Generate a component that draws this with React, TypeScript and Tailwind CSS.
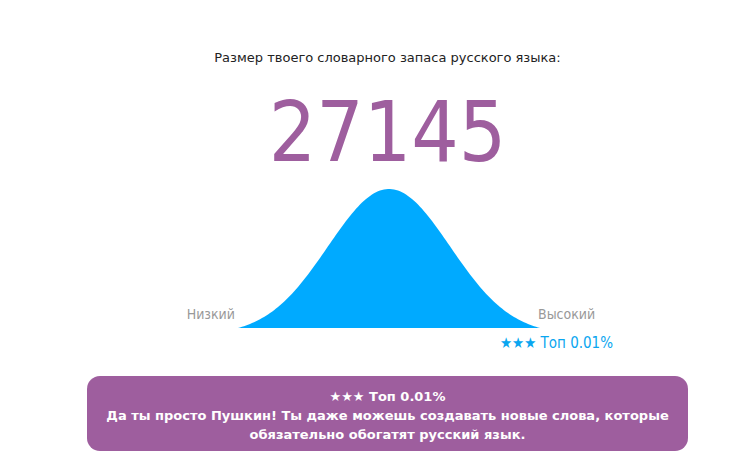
const COND = '"DejaVu Sans Condensed", "DejaVu Sans", Verdana, sans-serif';
const WIDE = '"DejaVu Sans", Verdana, sans-serif';

// bell curve, 302 x 141, sigma ~61
function bellPath() {
  const w = 302;
  const h = 140;
  const c = w / 2;
  const s = 61;
  const edge = Math.exp(-(c * c) / (2 * s * s));
  const pts: string[] = [];
  for (let x = 0; x <= w; x += 2) {
    const g = (Math.exp(-((x - c) ** 2) / (2 * s * s)) - edge) / (1 - edge);
    pts.push(`${x},${(h - g * (h - 1)).toFixed(2)}`);
  }
  return `M0,${h} L${pts.join(' L')} L${w},${h} Z`;
}

export default function App() {
  return (
    <div className="min-h-[462px] bg-white" style={{ fontFamily: COND }}>
      <div className="ml-[87px] flex w-[601px] flex-col items-center pt-[49px]">
        <p className="text-[13px] leading-[18px] text-[#222]" style={{ fontFamily: WIDE }}>
          Размер твоего словарного запаса русского языка:
        </p>

        <div className="mt-[24px] text-[83px] leading-[84px] text-[#9e5e9e]">27145</div>

        <div className="mt-[13px] grid w-full grid-cols-[1fr_auto_1fr] items-end">
          <span className="justify-self-end pb-[4px] text-[14px] text-[#999]">Низкий</span>
          <svg width="302" height="141" viewBox="0 0 302 141" className="ml-[3px] block">
            <path d={bellPath()} fill="#00aaff" />
          </svg>
          <span className="-ml-[2px] justify-self-start pb-[4px] text-[14px] text-[#999]">
            Высокий
          </span>
        </div>

        <div className="mt-[4px] flex w-full justify-end pr-[75px]">
          <span className="text-[15px] leading-[20px] text-[#0aa6f0]">★★★ Топ 0.01%</span>
        </div>

        <div
          className="mt-[23px] w-full rounded-[13px] bg-[#9e5e9e] px-[16px] pb-[7px] pt-[11px] text-center text-[13px] font-bold leading-[19px] text-white"
          style={{ fontFamily: WIDE }}
        >
          <p>★★★ Топ 0.01%</p>
          <p>
            Да ты просто Пушкин! Ты даже можешь создавать новые слова, которые
            <br />
            обязательно обогатят русский язык.
          </p>
        </div>
      </div>
    </div>
  );
}
